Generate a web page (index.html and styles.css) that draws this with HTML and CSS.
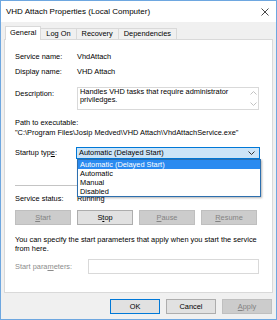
FILE: index.html
```html
<!DOCTYPE html>
<html lang="en">
<head>
  <meta charset="UTF-8">
  <title>VHD Attach Properties</title>
  <link rel="stylesheet" href="styles.css">
</head>
<body>
  <div class="window">
    <div class="titlebar">
      <span class="title">VHD Attach Properties (Local Computer)</span>
      <svg class="close" width="8" height="8" viewBox="0 0 8 8">
        <path d="M0.5 0.5 L7.5 7.5 M7.5 0.5 L0.5 7.5" stroke="#333" stroke-width="0.9" fill="none"/>
      </svg>
    </div>

    <div class="client">
      <div class="tabs">
        <div class="tab active">General</div>
        <div class="tab">Log On</div>
        <div class="tab">Recovery</div>
        <div class="tab">Dependencies</div>
      </div>

      <div class="panel">
        <div class="row">
          <span class="label">Service name:</span>
          <span>VhdAttach</span>
        </div>
        <div class="row gap-s">
          <span class="label">Display name:</span>
          <span>VHD Attach</span>
        </div>

        <div class="row top gap-l">
          <span class="label desc-label">Description:</span>
          <div class="textbox">
            <div class="textbox-text">Handles VHD tasks that require administrator priviledges.</div>
            <div class="scrollbar">
              <svg width="7" height="4" viewBox="0 0 7 4"><path d="M0.5 3.5 L3.5 0.5 L6.5 3.5" stroke="#c2c2c2" fill="none"/></svg>
              <svg width="7" height="4" viewBox="0 0 7 4"><path d="M0.5 0.5 L3.5 3.5 L6.5 0.5" stroke="#c2c2c2" fill="none"/></svg>
            </div>
          </div>
        </div>

        <div class="line path-label">Path to executable:</div>
        <div class="line">"C:\Program Files\Josip Medved\VHD Attach\VhdAttachService.exe"</div>

        <div class="row startup">
          <span class="label">Startup typ<u>e</u>:</span>
          <div class="combo">
            <div class="select">
              <span>Automatic (Delayed Start)</span>
              <svg width="7" height="4" viewBox="0 0 7 4"><path d="M0.5 0.5 L3.5 3.5 L6.5 0.5" stroke="#333" fill="none"/></svg>
            </div>
            <ul class="dropdown">
              <li class="selected">Automatic (Delayed Start)</li>
              <li>Automatic</li>
              <li>Manual</li>
              <li>Disabled</li>
            </ul>
          </div>
        </div>

        <div class="separator"></div>

        <div class="row status">
          <span class="label">Service status:</span>
          <span class="status-value">Running</span>
        </div>

        <div class="svc-buttons">
          <button class="btn" disabled><u>S</u>tart</button>
          <button class="btn">S<u>t</u>op</button>
          <button class="btn" disabled><u>P</u>ause</button>
          <button class="btn" disabled><u>R</u>esume</button>
        </div>

        <p class="note">You can specify the start parameters that apply when you start the service<br>from here.</p>

        <div class="row params">
          <span class="label params-label">Start para<u>m</u>eters:</span>
          <div class="input"></div>
        </div>
      </div>

      <div class="footer">
        <button class="btn default">OK</button>
        <button class="btn">Cancel</button>
        <button class="btn" disabled><u>A</u>pply</button>
      </div>
    </div>
  </div>
</body>
</html>
```

FILE: styles.css
```css
* {
  margin: 0;
  padding: 0;
  box-sizing: border-box;
}

body {
  font-family: 'Liberation Sans', Arial, sans-serif;
  font-size: 7.4px;
  color: #000;
  background: #fff;
}

/* Window frame */
.window {
  width: 277px;
  height: 320px;
  border: 1px solid #6ea7e0;
  display: flex;
  flex-direction: column;
  background: #f0f0f0;
}

.titlebar {
  height: 21px;
  background: #fff;
  display: flex;
  align-items: center;
  justify-content: space-between;
  padding: 0 7px 0 5px;
}

.title {
  font-size: 8px;
}

.client {
  flex: 1;
  display: flex;
  flex-direction: column;
  padding: 4px 3px 5px 3px;
}

/* Tabs */
.tabs {
  display: flex;
  align-items: flex-end;
  height: 14px;
  padding-left: 1px;
  margin-bottom: -1px;
  position: relative;
  z-index: 1;
}

.tab {
  height: 11px;
  line-height: 10px;
  padding: 0 5px;
  border: 1px solid #d9d9d9;
  border-bottom: none;
  background: #f0f0f0;
  margin-bottom: 1px;
  margin-left: -1px;
}

.tab:first-child {
  margin-left: 0;
}

.tab.active {
  height: 14px;
  line-height: 12px;
  background: #fff;
  margin-bottom: 0;
  padding: 0 4px;
}

/* Tab page */
.panel {
  flex: 1;
  background: #fff;
  border: 1px solid #d9d9d9;
  padding: 12px 12px 0 10px;
}

.row {
  display: flex;
  align-items: center;
  line-height: 10px;
}

.row.top {
  align-items: flex-start;
}

.gap-s {
  margin-top: 5px;
}

.gap-l {
  margin-top: 10px;
}

.label {
  width: 62px;
  flex: none;
}

.desc-label {
  padding-top: 2px;
}

.textbox {
  width: 182px;
  height: 23px;
  border: 1px solid #d9d9d9;
  display: flex;
}

.textbox-text {
  flex: 1;
  padding: 0 2px;
  line-height: 8px;
}

.scrollbar {
  width: 10px;
  display: flex;
  flex-direction: column;
  justify-content: space-between;
  align-items: center;
  padding: 3px 0 3px;
}

.line {
  line-height: 10px;
}

.path-label {
  margin-top: 8px;
}

/* Startup type combo */
.startup {
  margin-top: 9px;
}

.combo {
  position: relative;
  margin-left: -1px;
}

.select {
  width: 184px;
  height: 12px;
  border: 1px solid #0078d7;
  background: #cce4f7;
  display: flex;
  align-items: center;
  justify-content: space-between;
  padding: 0 4px 0 2px;
}

.dropdown {
  list-style: none;
  position: absolute;
  top: 12px;
  left: 1px;
  width: 184px;
  background: #fff;
  border: 1px solid #2d6fae;
  box-shadow: 1px 1px 2px rgba(0, 0, 0, 0.3);
  z-index: 2;
}

.dropdown li {
  height: 9px;
  line-height: 9px;
  padding-left: 2px;
}

.dropdown li.selected {
  background: #2a8af0;
  color: #fff;
}

.separator {
  margin-top: 26px;
  height: 1px;
  background: #c4c4c4;
}

.status {
  margin-top: 8px;
}

.status-value {
  position: relative;
  z-index: 1;
  line-height: 8px;
}

/* Buttons */
.btn {
  font-family: inherit;
  font-size: 7.4px;
  height: 15px;
  background: #e1e1e1;
  border: 1px solid #adadad;
  color: #000;
}

.btn:disabled {
  background: #cccccc;
  border-color: #bfbfbf;
  color: #838383;
}

.svc-buttons {
  display: flex;
  gap: 6px;
  margin-top: 6px;
}

.svc-buttons .btn {
  width: 56px;
}

.note {
  margin-top: 10px;
  line-height: 9px;
  white-space: nowrap;
}

.params {
  margin-top: 6px;
}

.params-label {
  width: 73px;
  color: #8c8c8c;
}

.input {
  width: 171px;
  height: 15px;
  border: 1px solid #d9d9d9;
}

.footer {
  display: flex;
  justify-content: flex-end;
  gap: 6px;
  margin-top: 6px;
  padding-right: 1px;
}

.footer .btn {
  width: 50px;
}

.btn.default {
  border-color: #0078d7;
}
```
